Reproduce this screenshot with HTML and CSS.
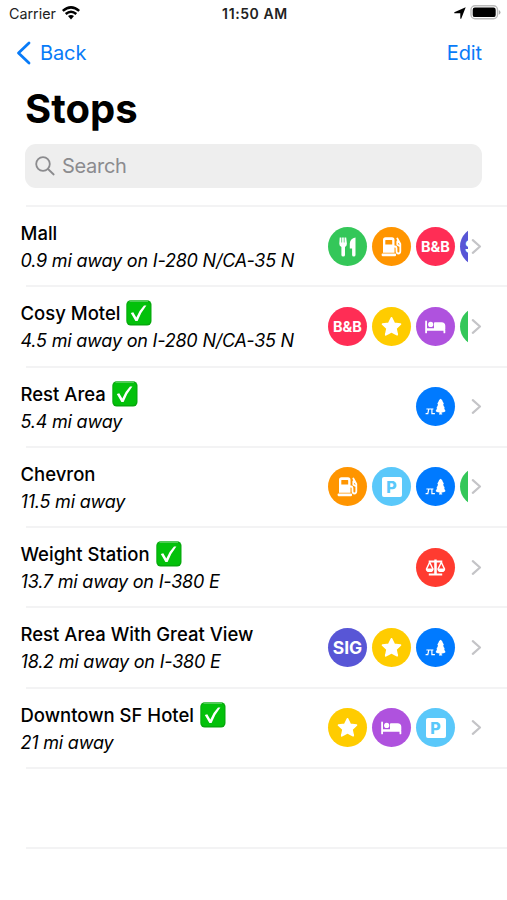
FILE: index.html
```
<!DOCTYPE html>
<html lang="en">
<head>
<meta charset="utf-8">
<title>Stops</title>
<link rel="stylesheet" href="styles.css">
</head>
<body>
<svg class="sprite" aria-hidden="true">
  <symbol id="food" viewBox="0 0 39 39">
    <path d="M11.700 10.400h1.700v5h.7v-5h1.700v5h.7v-5h1.700l.7 6.300q0 2.400-1.900 3.200v8q0 1.500-1.800 1.500t-1.800-1.500v-8q-2.100-.8-2.100-3.200z"/>
    <path d="M27.500 10.400v17.500q0 1.500-1.700 1.500t-1.700-1.500V21.500h-2.300v-5q.3-5 5.700-6.100z"/>
  </symbol>
  <symbol id="fuel" viewBox="0 0 39 39">
    <path fill-rule="evenodd" d="M13.500 10.200h6.500q2.500 0 2.500 2.500v13H11v-13q0-2.500 2.500-2.500zm.2 2.700q-.4 0-.4.500v4h6.900v-4q0-.5-.4-.5z"/>
    <path d="M10.500 26.400h12.700q.9 0 .9 1.400t-.9 1.400H10.500q-.9 0-.9-1.400t.9-1.400z"/>
    <path class="line" d="M22 19.500h1q1.500 0 1.500 2v2.800q0 2.200 1.900 2.200t1.900-2.200V17l-3-5.500M25.300 14.500v3.200l2.800 1.600"/>
  </symbol>
  <symbol id="star" viewBox="0 0 39 39">
    <path class="round" d="M19.500 10.900l2.700 5.500 6.200.8-4.500 4.200 1.300 6.300-5.700-3.100-5.700 3.100 1.300-6.300-4.500-4.200 6.200-.8z"/>
  </symbol>
  <symbol id="bed" viewBox="0 0 39 39">
    <path d="M10 13.500q1 0 1 .9v6.800h17.200q1.100.3 1.100 1.500v3q0 .6-.9.600t-.9-.6v-2H11v2q0 .6-.9.600t-.9-.6V14.400q0-.9.800-.9z"/>
    <path d="M18.800 15.200h6.700q3.700 0 3.800 3.500v3.300H18v-5.800q0-1 .8-1z"/>
    <circle cx="14.700" cy="17.400" r="2.600"/>
  </symbol>
  <symbol id="park" viewBox="0 0 39 39">
    <path d="M24.600 11.800q1.900.8 2.200 3 .7 1.100 1 1.800-.1.600-.6.800.4 1.800 1.500 2.900l-.5.800q.5 1.800 1.400 2.900-.7 1.500-4 1.400v1.100h.6v.9h-3.200v-.9h.6v-1.100q-3.300.1-4-1.400.9-1.100 1.400-2.900l-.5-.8q1.100-1.100 1.500-2.900-.5-.2-.6-.8.300-.7 1-1.800.3-2.200 2.200-3z"/>
    <path class="line table" d="M10.400 22h7M12.800 22l-1 4.600H9.600M15.900 22v4.600h3"/>
  </symbol>
  <symbol id="scale" viewBox="0 0 39 39">
    <path d="M18.300 11.500h2.400v1.100h5.600v1.800h-5.500v11.200h5.400v1.800H12.800v-1.800h5.400V14.400h-5.500v-1.800h5.600z"/>
    <path class="line thin" d="M13.700 14.300l-3.200 6.700q.4 2.300 3.200 2.300t3.200-2.300zM25.300 14.300l-3.200 6.700q.4 2.300 3.200 2.300t3.200-2.300z"/>
    <path d="M10 20.500h7.400q-.4 3.500-3.700 3.500T10 20.500zM21.600 20.500H29q-.4 3.500-3.700 3.500t-3.700-3.500z"/>
  </symbol>
  <symbol id="chevron" viewBox="0 0 11 17">
    <path d="M1.800 2.200L9 8.500l-7.200 6.300"/>
  </symbol>
  <symbol id="done" viewBox="0 0 26 26">
    <rect x=".3" y=".3" width="25.200" height="25.200" rx="4.500" fill="#06a80c"/>
    <rect x="1.300" y="1.500" width="23" height="22.500" rx="3.800" fill="#03c10b"/>
    <path d="M4 1.200h17.500" stroke="#65d66c" stroke-width="1.200" stroke-linecap="round"/>
    <path d="M4.800 13.100l2.500-.8 3 5.300q3-7.300 7.700-12l2.400-.2q-5.700 7-8.800 15.600H9.400z" fill="#fff"/>
  </symbol>
</svg>

<header class="status">
  <div class="status-left"><span>Carrier</span>
    <svg class="wifi" viewBox="0 0 20 16"><path d="M1.800 5.900q8.200-7 16.400 0M4.700 9q5.300-4.500 10.600 0" fill="none" stroke="#000" stroke-width="2.500"/><path d="M7 11.100q3-2.200 6 0l-3 3.300z"/></svg>
  </div>
  <b class="time">11:50 AM</b>
  <div class="status-right">
    <svg class="locate" viewBox="0 0 12 12"><path d="M11.700.3L7.200 11.700H6.300V6.200H.3v-.9z"/></svg>
    <svg class="battery" viewBox="0 0 31 15"><rect x="1" y=".8" width="26.500" height="13" rx="4" fill="#fff" stroke="#bbb" stroke-width="1.400"/><rect x="2.700" y="2.500" width="23" height="9.600" rx="2.200"/><path d="M28.800 5q1.700 1 1.700 2.400t-1.700 2.400z" fill="#aaa"/></svg>
  </div>
</header>

<nav class="nav">
  <a class="back"><svg viewBox="0 0 15 24"><path d="M13 2L2.500 12 13 22"/></svg><span>Back</span></a>
  <a class="edit">Edit</a>
</nav>
<h1>Stops</h1>
<div class="search">
  <svg viewBox="0 0 20 20"><circle cx="8" cy="8" r="6.800"/><path d="M13 13l5.700 5.500"/></svg>
  <span>Search</span>
</div>

<ul class="stops">
  <li>
    <div class="info"><h2>Mall</h2><p>0.9 mi away on I-280 N/CA-35 N</p></div>
    <div class="badges more"><i class="green"><svg><use href="#food"/></svg></i><i class="orange"><svg><use href="#fuel"/></svg></i><i class="pink">B&amp;B</i><i class="indigo sig">SIG</i></div>
    <svg class="chevron"><use href="#chevron"/></svg>
  </li>
  <li>
    <div class="info"><h2>Cosy Motel <svg class="done"><use href="#done"/></svg></h2><p>4.5 mi away on I-280 N/CA-35 N</p></div>
    <div class="badges more"><i class="pink">B&amp;B</i><i class="yellow"><svg><use href="#star"/></svg></i><i class="purple"><svg><use href="#bed"/></svg></i><i class="green"></i></div>
    <svg class="chevron"><use href="#chevron"/></svg>
  </li>
  <li>
    <div class="info"><h2>Rest Area <svg class="done"><use href="#done"/></svg></h2><p>5.4 mi away</p></div>
    <div class="badges"><i class="blue"><svg><use href="#park"/></svg></i></div>
    <svg class="chevron"><use href="#chevron"/></svg>
  </li>
  <li>
    <div class="info"><h2>Chevron</h2><p>11.5 mi away</p></div>
    <div class="badges more"><i class="orange"><svg><use href="#fuel"/></svg></i><i class="sky"><b class="parking">P</b></i><i class="blue"><svg><use href="#park"/></svg></i><i class="green"></i></div>
    <svg class="chevron"><use href="#chevron"/></svg>
  </li>
  <li>
    <div class="info"><h2>Weight Station <svg class="done"><use href="#done"/></svg></h2><p>13.7 mi away on I-380 E</p></div>
    <div class="badges"><i class="red"><svg><use href="#scale"/></svg></i></div>
    <svg class="chevron"><use href="#chevron"/></svg>
  </li>
  <li>
    <div class="info"><h2>Rest Area With Great View</h2><p>18.2 mi away on I-380 E</p></div>
    <div class="badges"><i class="indigo sig">SIG</i><i class="yellow"><svg><use href="#star"/></svg></i><i class="blue"><svg><use href="#park"/></svg></i></div>
    <svg class="chevron"><use href="#chevron"/></svg>
  </li>
  <li>
    <div class="info"><h2>Downtown SF Hotel <svg class="done"><use href="#done"/></svg></h2><p>21 mi away</p></div>
    <div class="badges"><i class="yellow"><svg><use href="#star"/></svg></i><i class="purple"><svg><use href="#bed"/></svg></i><i class="sky"><b class="parking">P</b></i></div>
    <svg class="chevron"><use href="#chevron"/></svg>
  </li>
  <li></li>
  <li></li>
</ul>
</body>
</html>
```
FILE: styles.css
```
* { box-sizing: border-box; margin: 0; padding: 0; }
body {
  height: 900px;
  overflow: hidden;
  background: #fff;
  color: #000;
  font-family: Inter, "Liberation Sans", sans-serif;
}
svg { display: block; flex: none; }
.sprite { width: 0; height: 0; float: left; }

.status {
  display: grid;
  grid-template-columns: 1fr auto 1fr;
  align-items: center;
  height: 28px;
  padding: 0 6px 2px 9px;
  font-size: 14.3px;
  color: #222;
}
.status-left, .status-right { display: flex; align-items: center; }
.status-left { gap: 5px; }
.status-right { justify-content: flex-end; gap: 4px; }
.wifi { width: 20px; height: 16px; margin-bottom: 1px; }
.time { font-weight: 600; font-size: 14px; letter-spacing: 0.6px; }
.locate { width: 12px; height: 12px; }
.battery { width: 31px; height: 15px; margin-bottom: 1px; }

.nav {
  display: flex;
  align-items: center;
  justify-content: space-between;
  height: 48px;
  padding: 1px 25px 0 16px;
  color: #087bf8;
  font-size: 20px;
  letter-spacing: -0.1px;
}
.back { display: flex; align-items: center; gap: 9px; }
.back svg { width: 15px; height: 24px; fill: none; stroke: currentColor; stroke-width: 2.8; stroke-linecap: round; stroke-linejoin: round; }

h1 { height: 68px; padding-left: 25px; font-size: 40px; line-height: 66px; font-weight: 700; }

.search {
  display: flex;
  align-items: center;
  gap: 7px;
  height: 44px;
  margin: 0 25px 17px;
  padding-left: 10px;
  border-radius: 11px;
  background: #eee;
  color: #8b8b8e;
  font-size: 20px;
  letter-spacing: -0.3px;
}
.search svg { width: 20px; height: 20px; fill: none; stroke: currentColor; stroke-width: 1.8; stroke-linecap: round; }

.stops { list-style: none; }
.stops li {
  display: flex;
  align-items: center;
  height: 80.25px;
  margin-left: 26px;
  padding-right: 25px;
  border-top: 2px solid #f3f3f4;
}
.info { flex: 1; margin-left: -5.5px; padding-top: 2px; }
.info h2 {
  display: flex;
  align-items: center;
  gap: 6px;
  height: 28px;
  font-size: 18.5px;
  font-weight: 500;
  white-space: nowrap;
}
.info p { height: 28px; line-height: 28px; font-size: 18px; font-style: italic; letter-spacing: -0.2px; white-space: nowrap; }
.done { width: 26px; height: 26px; }

.badges {
  display: flex;
  justify-content: flex-end;
  gap: 5px;
  width: 140px;
  margin-right: 0.5px;
  padding-right: 13px;
}
.badges.more { justify-content: flex-start; padding-right: 0; overflow: hidden; }
.badges i {
  display: flex;
  flex: none;
  align-items: center;
  justify-content: center;
  width: 39px;
  height: 39px;
  border-radius: 50%;
  color: #fff;
  font-size: 14.5px;
  font-style: normal;
  font-weight: 700;
}
.badges i.sig { font-size: 17.5px; }
.badges svg { width: 39px; height: 39px; fill: #fff; }
.line { fill: none; stroke: #fff; stroke-width: 1.8; stroke-linecap: round; stroke-linejoin: round; }
.thin { stroke-width: 1.5; }
.table { stroke-width: 1.2; stroke-linecap: butt; stroke-linejoin: miter; }
.round { stroke: #fff; stroke-width: 1.8; stroke-linejoin: round; }
.parking {
  width: 20px;
  height: 20px;
  border-radius: 2px;
  background: #fff;
  color: #5ac8fa;
  font-size: 16px;
  font-weight: 800;
  line-height: 20px;
  text-align: center;
}
.green { background: #34c759; }
.orange { background: #ff9500; }
.pink { background: #ff2d55; }
.indigo { background: #5856d6; }
.yellow { background: #ffcc00; }
.purple { background: #af52de; }
.blue { background: #007aff; }
.sky { background: #5ac8fa; }
.red { background: #ff3b30; }
.chevron { width: 11px; height: 17px; margin-left: 2.5px; fill: none; stroke: #c4c4c7; stroke-width: 2.2; stroke-linecap: round; stroke-linejoin: round; }
```
